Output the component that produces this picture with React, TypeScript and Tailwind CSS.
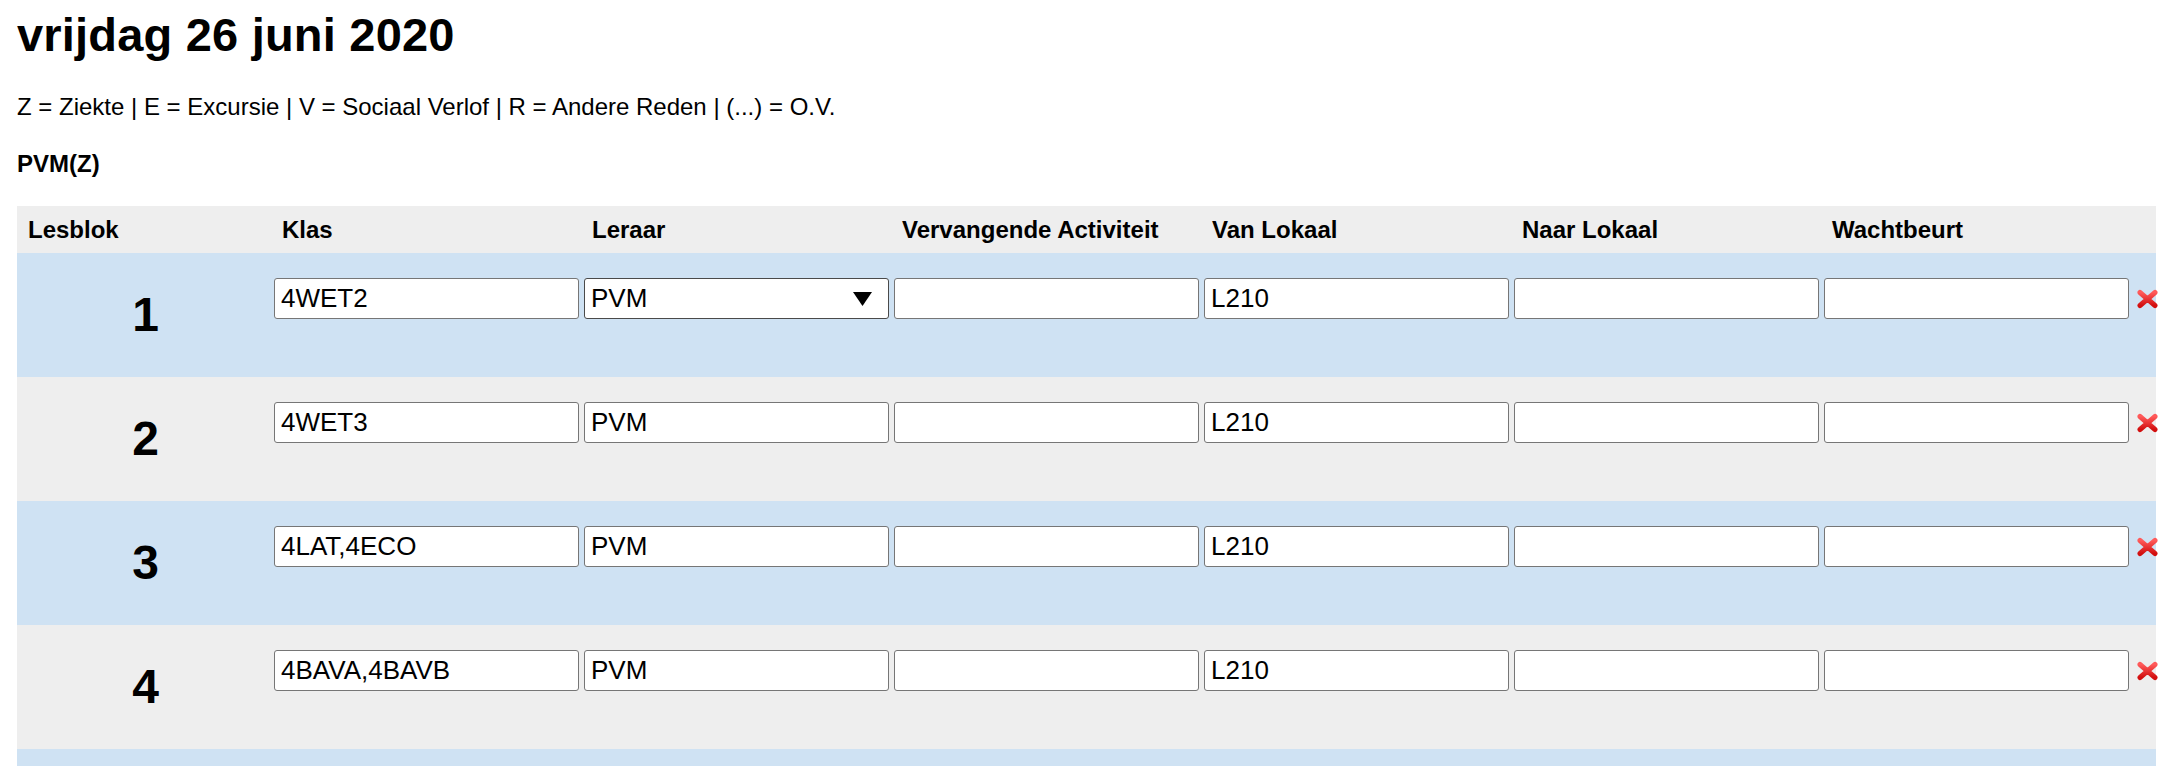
import React from "react";

const rows = [
  { blok: 1, klas: "4WET2", leraar: "PVM", select: true },
  { blok: 2, klas: "4WET3", leraar: "PVM" },
  { blok: 3, klas: "4LAT,4ECO", leraar: "PVM" },
  { blok: 4, klas: "4BAVA,4BAVB", leraar: "PVM" },
  { blok: 5, klas: "4GRA", leraar: "PVM" },
];

const headers = ["Klas", "Leraar", "Vervangende Activiteit", "Van Lokaal", "Naar Lokaal", "Wachtbeurt"];

function Field({ value = "" }: { value?: string }) {
  return (
    <input
      readOnly
      defaultValue={value}
      className="w-[305px] h-[41px] shrink-0 bg-white border border-[#767676] rounded-[3px] pl-[6px] text-[26px] text-black outline-none"
    />
  );
}

// the red cross from the old icon set
function DeleteIcon() {
  return (
    <svg width="21" height="20" viewBox="0 0 21 20" className="shrink-0">
      <defs>
        <linearGradient id="rx" x1="0" y1="0" x2="0" y2="1">
          <stop offset="0" stopColor="#ff5a5a" />
          <stop offset="1" stopColor="#d20f0f" />
        </linearGradient>
      </defs>
      <path
        d="M3 3.5 L10.5 10 M18 3.5 L10.5 10 M3 16.5 L10.5 10 M18 16.5 L10.5 10"
        stroke="url(#rx)"
        strokeWidth="5"
        strokeLinecap="round"
      />
    </svg>
  );
}

export default function App() {
  return (
    <div className="pl-[17px] font-['Liberation_Sans',Arial,sans-serif] text-black bg-white min-h-screen">
      {/* Title */}
      <h1 className="pt-[13px] text-[47px] leading-[44px] font-bold tracking-[0.2px]">vrijdag 26 juni 2020</h1>

      {/* Legend */}
      <p className="mt-[39px] text-[24px] leading-[22px]">
        Z = Ziekte | E = Excursie | V = Sociaal Verlof | R = Andere Reden | (...) = O.V.
      </p>

      <p className="mt-[35px] text-[24px] leading-[22px] font-bold">PVM(Z)</p>

      {/* Table */}
      <div className="mt-[31px] w-[2139px]">
        <div className="flex items-center h-[47px] bg-[#eeeeee] text-[24px] leading-[22px] font-bold">
          <div className="w-[257px] pl-[11px] shrink-0">Lesblok</div>
          <div className="flex gap-[5px]">
            {headers.map((h) => (
              <div key={h} className="w-[305px] pl-[8px] shrink-0">
                {h}
              </div>
            ))}
          </div>
        </div>

        {rows.map((row, index) => (
          <div
            key={row.blok}
            className={`flex h-[124px] ${index % 2 === 0 ? "bg-[#cfe2f3]" : "bg-[#eeeeee]"}`}
          >
            <div className="w-[257px] shrink-0 flex items-center justify-center text-[48px] font-bold">
              {row.blok}
            </div>
            <div className="flex items-start gap-[5px] pt-[25px]">
              <Field value={row.klas} />
              {row.select ? (
                <div className="w-[305px] h-[41px] shrink-0 flex items-center justify-between bg-white border border-[#4a4a4a] rounded-[3px] pl-[6px] pr-[16px] text-[26px]">
                  <span>{row.leraar}</span>
                  <svg width="19" height="14" viewBox="0 0 19 14">
                    <path d="M0 0 H19 L9.5 14 Z" fill="#000" />
                  </svg>
                </div>
              ) : (
                <Field value={row.leraar} />
              )}
              <Field />
              <Field value="L210" />
              <Field />
              <Field />
              <div className="h-[41px] flex items-center ml-[3px]">
                <DeleteIcon />
              </div>
            </div>
          </div>
        ))}
      </div>
    </div>
  );
}
